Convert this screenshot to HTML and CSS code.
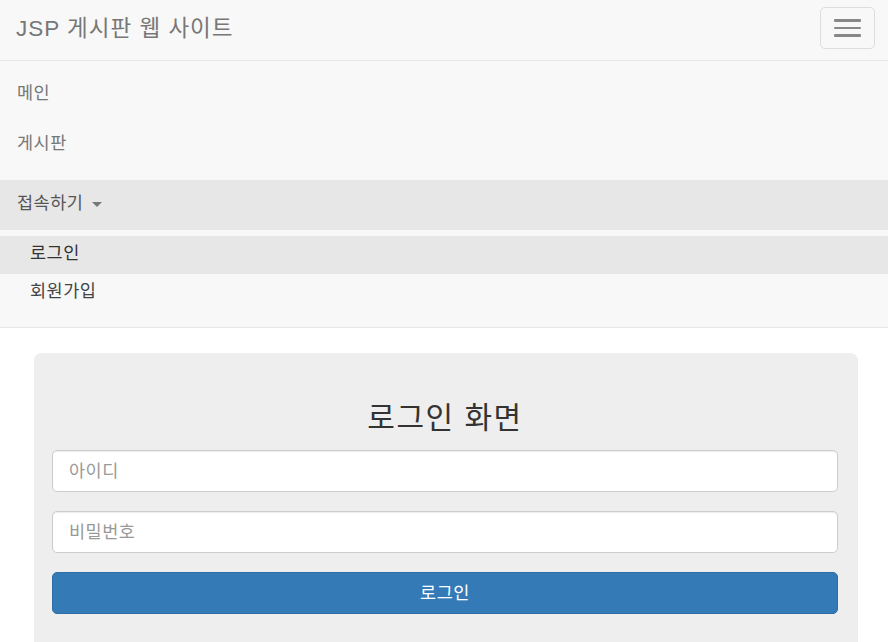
FILE: index.html
```html
<!DOCTYPE html>
<html lang="ko">
<head>
	<meta charset="utf-8">
	<title>JSP 게시판 웹 사이트</title>
	<link rel="stylesheet" href="styles.css">
</head>

<body>
	<nav class="navbar">
		<div class="navbar-header">
			<a class="navbar-brand" href="#">JSP 게시판 웹 사이트</a>
			<button type="button" class="navbar-toggle">
				<span class="icon-bar"></span>
				<span class="icon-bar"></span>
				<span class="icon-bar"></span>
			</button>
		</div>
		<div class="navbar-collapse">
			<ul class="nav">
				<li><a href="#">메인</a></li>
				<li><a href="#">게시판</a></li>
			</ul>
			<ul class="nav nav-right">
				<li class="open">
					<a href="#" class="dropdown-toggle">접속하기 <span class="caret"></span></a>
					<ul class="dropdown-menu">
						<li class="active"><a href="#">로그인</a></li>
						<li><a href="#">회원가입</a></li>
					</ul>
				</li>
			</ul>
		</div>
	</nav>

	<div class="container">
		<div class="jumbotron">
			<form method="post" action="#">
				<h3>로그인 화면</h3>
				<div class="form-group">
					<input type="text" class="form-control" placeholder="아이디" name="userID" maxlength="20">
				</div>
				<div class="form-group">
					<input type="password" class="form-control" placeholder="비밀번호" name="userPassword" maxlength="20">
				</div>
				<button type="submit" class="btn-primary">로그인</button>
			</form>
		</div>
	</div>
</body>
</html>
```

FILE: styles.css
```css
*{
	margin: 0px;
	padding: 0px;
	box-sizing: border-box;
}
body{
	font-family: "Liberation Sans", "Noto Sans CJK KR", sans-serif;
	font-size: 17.5px;
	color: #333;
	background-color: #fff;
	letter-spacing: 0.5px;
	overflow: hidden;
}
a{
	text-decoration: none;
}
ul{
	list-style: none;
}

/* barra de navegacion */
.navbar{
	background-color: #f8f8f8;
	border-bottom: 1px solid #e7e7e7;
}
.navbar-header{
	height: 60px;
	display: flex;
	justify-content: space-between;
	align-items: flex-start;
	padding: 0px 13px 0px 16px;
}
.navbar-brand{
	font-size: 22.5px;
	line-height: 58px;
	letter-spacing: 1px;
	color: #777;
}
.navbar-toggle{
	margin-top: 7px;
	width: 55px;
	height: 42px;
	background: transparent;
	border: 1px solid #ddd;
	border-radius: 5px;
	display: flex;
	flex-direction: column;
	align-items: center;
	justify-content: center;
	gap: 5px;
}
.icon-bar{
	display: block;
	width: 27px;
	height: 2.5px;
	background-color: #888;
	border-radius: 1px;
}
.navbar-collapse{
	border-top: 1px solid #e7e7e7;
	padding: 9px 0px 10px 0px;
}
.nav li a{
	display: block;
	height: 50px;
	line-height: 47px;
	padding: 0px 17px;
	color: #777;
}
.nav-right{
	margin-top: 10px;
}
.open > .dropdown-toggle{
	background-color: #e7e7e7;
	color: #555;
}
.caret{
	display: inline-block;
	width: 0px;
	height: 0px;
	margin-left: 3px;
	vertical-align: middle;
	border-top: 5px solid #777;
	border-left: 5px solid transparent;
	border-right: 5px solid transparent;
}
.dropdown-menu{
	padding: 6px 0px;
}
.nav .dropdown-menu li a{
	height: 37.5px;
	line-height: 34px;
	padding: 0px 17px 0px 30px;
	color: #444;
}
.nav .dropdown-menu li.active a{
	background-color: #e7e7e7;
	color: #333;
}

/* contenido */
.container{
	padding-top: 25px;
}
.jumbotron{
	margin: 0px 30px 0px 34px;
	background-color: #eee;
	border-radius: 7.5px;
	padding: 48px 20px 40px 18px;
}
.jumbotron h3{
	font-size: 30px;
	font-weight: 400;
	line-height: 33px;
	letter-spacing: 1.5px;
	text-align: center;
	margin-bottom: 16px;
	color: #333;
}
.form-group{
	margin-bottom: 19px;
}
.form-control{
	display: block;
	width: 100%;
	height: 42px;
	padding: 0px 16px;
	font-family: "Liberation Sans", "Noto Sans CJK KR", sans-serif;
	font-size: 17.5px;
	letter-spacing: 0.5px;
	color: #555;
	background-color: #fff;
	border: 1px solid #ccc;
	border-radius: 5px;
	box-shadow: inset 0 1px 1px rgba(0,0,0,0.075);
}
.form-control::placeholder{
	color: #999;
}
.btn-primary{
	display: block;
	width: 100%;
	height: 42px;
	line-height: 38px;
	font-family: "Liberation Sans", "Noto Sans CJK KR", sans-serif;
	font-size: 17.5px;
	letter-spacing: 0.5px;
	color: #fff;
	background-color: #337ab7;
	border: 1px solid #2e6da4;
	border-radius: 5px;
	cursor: pointer;
}
```
